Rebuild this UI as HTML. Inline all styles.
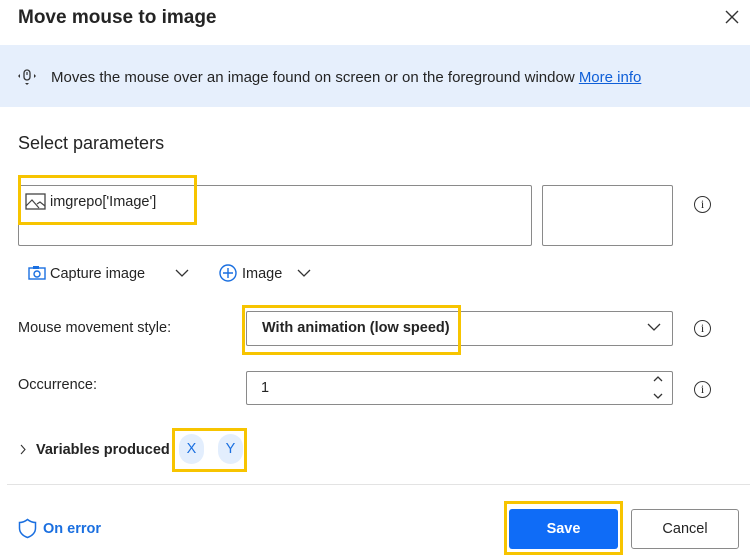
<!DOCTYPE html>
<html><head><style>
body{margin:0;width:750px;height:559px;background:#fff;font-family:"Liberation Sans",sans-serif;color:#242424;position:relative;overflow:hidden}
.a{position:absolute}
.box{position:absolute;border:1px solid #8a8a8a;border-radius:2px;box-sizing:border-box}
.yb{position:absolute;border:3px solid #f7c400;box-sizing:border-box}
.info{position:absolute;width:17px;height:17px;border:1.3px solid #333;border-radius:50%;box-sizing:border-box;font-size:12px;text-align:center;line-height:15px;font-family:"Liberation Serif",serif}
</style></head><body>
<div class="a" style="left:18px;top:7px;font-size:19px;font-weight:bold">Move mouse to image</div>
<svg class="a" style="left:725px;top:10px" width="14" height="14"><path d="M1 1L13 13M13 1L1 13" stroke="#333" stroke-width="1.4"/></svg>
<div class="a" style="left:0;top:45px;width:750px;height:62px;background:#e6effc"></div>
<svg class="a" style="left:17px;top:67px" width="20" height="20"><rect x="7" y="3" width="6" height="10" rx="3" fill="none" stroke="#333" stroke-width="1.3"/><path d="M10 5v3" stroke="#333" stroke-width="1.2"/><path d="M3 7l-2 2 2 2zM17 7l2 2-2 2zM8 16l2 2 2-2z" fill="#333"/></svg>
<div class="a" style="left:51px;top:69px;font-size:15px">Moves the mouse over an image found on screen or on the foreground window <span style="color:#0f5fd8;text-decoration:underline">More info</span></div>
<div class="a" style="left:18px;top:133px;font-size:18px">Select parameters</div>
<div class="box" style="left:18px;top:185px;width:514px;height:61px"></div>
<div class="box" style="left:542px;top:185px;width:131px;height:61px"></div>
<div class="yb" style="left:18px;top:175px;width:179px;height:50px"></div>
<svg class="a" style="left:25px;top:193px" width="21" height="17"><rect x="1" y="1" width="19" height="15" fill="none" stroke="#444" stroke-width="1.3"/><path d="M1 13l6-6 7 8M12 11l3-2 5 4" fill="none" stroke="#444" stroke-width="1.2"/></svg>
<div class="a" style="left:50px;top:194px;font-size:14.5px">imgrepo['Image']</div>
<div class="info" style="left:694px;top:196px">i</div>
<svg class="a" style="left:28px;top:265px" width="18" height="15"><rect x="1" y="3" width="16" height="11" fill="none" stroke="#1a6fe0" stroke-width="1.4"/><rect x="5" y="1" width="6" height="3" fill="#1a6fe0"/><circle cx="9" cy="9" r="3" fill="none" stroke="#1a6fe0" stroke-width="1.4"/></svg>
<div class="a" style="left:50px;top:266px;font-size:14.5px">Capture image</div>
<svg class="a" style="left:175px;top:269px" width="14" height="9"><path d="M1 1l6 6 6-6" fill="none" stroke="#333" stroke-width="1.3"/></svg>
<svg class="a" style="left:219px;top:264px" width="18" height="18"><circle cx="9" cy="9" r="8" fill="none" stroke="#1a6fe0" stroke-width="1.4"/><path d="M9 4v10M4 9h10" stroke="#1a6fe0" stroke-width="1.4"/></svg>
<div class="a" style="left:242px;top:266px;font-size:14.5px">Image</div>
<svg class="a" style="left:297px;top:269px" width="14" height="9"><path d="M1 1l6 6 6-6" fill="none" stroke="#333" stroke-width="1.3"/></svg>
<div class="a" style="left:18px;top:320px;font-size:14.5px">Mouse movement style:</div>
<div class="box" style="left:246px;top:311px;width:427px;height:35px"></div>
<div class="yb" style="left:242px;top:305px;width:219px;height:50px"></div>
<div class="a" style="left:262px;top:320px;font-size:14.5px;font-weight:bold">With animation (low speed)</div>
<svg class="a" style="left:647px;top:323px" width="14" height="9"><path d="M1 1l6 6 6-6" fill="none" stroke="#333" stroke-width="1.3"/></svg>
<div class="info" style="left:694px;top:320px">i</div>
<div class="a" style="left:18px;top:377px;font-size:14.5px">Occurrence:</div>
<div class="box" style="left:246px;top:371px;width:427px;height:34px"></div>
<div class="a" style="left:261px;top:380px;font-size:14.5px">1</div>
<svg class="a" style="left:652px;top:375px" width="12" height="26"><path d="M2 6l4-4 4 4M2 19l4 4 4-4" fill="none" stroke="#333" stroke-width="1.3"/></svg>
<div class="info" style="left:694px;top:381px">i</div>
<svg class="a" style="left:20px;top:444px" width="7" height="11"><path d="M1 1l4 4.5-4 4.5" fill="none" stroke="#333" stroke-width="1.1"/></svg>
<div class="a" style="left:36px;top:442px;font-size:14.5px;font-weight:bold">Variables produced</div>
<div class="yb" style="left:172px;top:428px;width:75px;height:44px"></div>
<div class="a" style="left:179px;top:434px;width:25px;height:30px;border-radius:13px;background:#e3eefd;color:#1a6fe0;font-size:14.5px;text-align:center;line-height:30px">X</div>
<div class="a" style="left:218px;top:434px;width:25px;height:30px;border-radius:13px;background:#e3eefd;color:#1a6fe0;font-size:14.5px;text-align:center;line-height:30px">Y</div>
<div class="a" style="left:7px;top:484px;width:743px;height:1px;background:#e3e3e3"></div>
<svg class="a" style="left:18px;top:518px" width="19" height="21"><path d="M9.5 1.5C7 3.5 4 4.5 1.5 4.5V10c0 5 4 8 8 9.5 4-1.5 8-4.5 8-9.5V4.5C15 4.5 12 3.5 9.5 1.5z" fill="none" stroke="#1a6fe0" stroke-width="1.5"/></svg>
<div class="a" style="left:43px;top:521px;font-size:14.5px;font-weight:bold;color:#1a6fe0">On error</div>
<div class="yb" style="left:504px;top:501px;width:119px;height:54px"></div>
<div class="a" style="left:509px;top:509px;width:109px;height:40px;background:#0f6cf7;border-radius:3px;color:#fff;font-weight:bold;font-size:14.5px;text-align:center;line-height:40px">Save</div>
<div class="a" style="left:631px;top:509px;width:108px;height:40px;border:1px solid #8a8a8a;border-radius:3px;box-sizing:border-box;font-size:14.5px;text-align:center;line-height:38px">Cancel</div>
</body></html>
